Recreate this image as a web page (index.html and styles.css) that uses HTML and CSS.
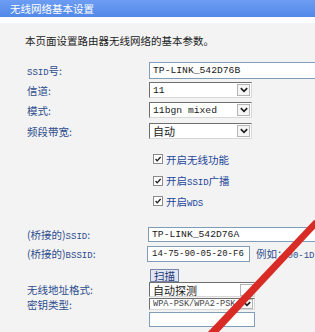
FILE: index.html
```html
<!DOCTYPE html>
<html lang="zh-CN">
<head>
    <meta charset="UTF-8">
    <meta name="viewport" content="width=device-width, initial-scale=1.0">
    <title>无线网络基本设置</title>
    <link rel="stylesheet" href="styles.css">
</head>
<body>

<div class="header">无线网络基本设置</div>

<div class="page">
    <p class="desc">本页面设置路由器无线网络的基本参数。</p>

    <div class="row r-ssid">
        <span class="lbl"><span class="en">SSID</span>号:</span>
        <span class="txt wide">TP-LINK_542D76B</span>
    </div>
    <div class="row r-norm">
        <span class="lbl">信道:</span>
        <span class="sel"><span class="val">11</span><span class="dd"><svg viewBox="0 0 11 11"><path d="M2 3.5 L5.5 7 L9 3.5"/></svg></span></span>
    </div>
    <div class="row r-norm">
        <span class="lbl">模式:</span>
        <span class="sel"><span class="val">11bgn mixed</span><span class="dd"><svg viewBox="0 0 11 11"><path d="M2 3.5 L5.5 7 L9 3.5"/></svg></span></span>
    </div>
    <div class="row r-band">
        <span class="lbl">频段带宽:</span>
        <span class="sel"><span class="val cjk">自动</span><span class="dd"><svg viewBox="0 0 11 11"><path d="M2 3.5 L5.5 7 L9 3.5"/></svg></span></span>
    </div>

    <div class="row check c1">
        <span class="cb"><svg viewBox="0 0 10 10"><path d="M2 5 L4 7.3 L8.3 2.5"/></svg></span>
        <span class="ctext">开启无线功能</span>
    </div>
    <div class="row check c2">
        <span class="cb"><svg viewBox="0 0 10 10"><path d="M2 5 L4 7.3 L8.3 2.5"/></svg></span>
        <span class="ctext">开启<span class="en">SSID</span>广播</span>
    </div>
    <div class="row check c3">
        <span class="cb"><svg viewBox="0 0 10 10"><path d="M2 5 L4 7.3 L8.3 2.5"/></svg></span>
        <span class="ctext">开启<span class="en">WDS</span></span>
    </div>

    <div class="row r-bridge">
        <span class="lbl">(桥接的)<span class="en">SSID</span>:</span>
        <span class="txt wide thin">TP-LINK_542D76A</span>
    </div>
    <div class="row r-bssid">
        <span class="lbl">(桥接的)<span class="en">BSSID</span>:</span>
        <span class="txt mac">14-75-90-05-20-F6</span>
        <span class="hint">例如：<span class="en">00-1D</span></span>
    </div>
    <div class="row r-scan">
        <span class="lbl"></span>
        <span class="btn">扫描</span>
    </div>
    <div class="row r-addr">
        <span class="lbl">无线地址格式:</span>
        <span class="sel big"><span class="val cjk">自动探测</span><span class="dd blank"></span></span>
    </div>
    <div class="row r-key">
        <span class="lbl">密钥类型:</span>
        <span class="sel big small"><span class="val">WPA-PSK/WPA2-PSK</span><span class="dd"><svg viewBox="0 0 11 11"><path d="M2 3.5 L5.5 7 L9 3.5"/></svg></span></span>
    </div>
    <div class="row r-last">
        <span class="lbl"></span>
        <span class="txt big"></span>
    </div>

    <svg class="arrow" viewBox="0 0 315 332" width="315" height="332">
        <polygon points="206,334 217,334 320,223 314,220"/>
    </svg>
</div>

</body>
</html>
```

FILE: styles.css
```css
body {
    margin: 0;
    background-color: #f3f3f3;
    font-family: "Noto Sans CJK SC", sans-serif;
    width: 315px;
    height: 332px;
    overflow: hidden;
}
.header {
    height: 17px;
    line-height: 17px;
    padding-left: 10px;
    font-size: 10.5px;
    color: #ffffff;
    background: linear-gradient(#6c9df3, #5288e8);
    border-bottom: 6px solid #fdfdff;
}
.page {
    position: relative;
    height: 309px;
}
.desc {
    margin: 0;
    padding: 10px 0 0 25px;
    height: 27px;
    line-height: 16px;
    font-size: 10.5px;
    color: #1c1c1c;
}
.row {
    display: flex;
    align-items: center;
    padding-left: 27px;
}
.lbl {
    width: 122px;
    flex-shrink: 0;
    font-size: 10.5px;
    color: #2e4c8e;
    white-space: nowrap;
}
.en {
    font-family: "Liberation Mono", monospace;
    font-size: 9px;
}
.r-ssid { height: 20px; }
.r-norm { height: 20px; }
.r-band { height: 22px; }
.check {
    padding-left: 153px;
    gap: 3px;
}
.c1 { height: 22px; margin-top: 6px; }
.c2 { height: 21px; }
.c3 { height: 20px; }
.r-bridge { height: 20px; margin-top: 13px; }
.r-bssid { height: 19px; }
.r-scan { height: 13px; margin-top: 6px; }
.r-addr { height: 15px; }
.r-key { height: 14px; }
.r-last { height: 20px; align-items: flex-start; padding-top: 1px; }

.txt {
    box-sizing: border-box;
    height: 17px;
    border: 1px solid #7f9db9;
    background-color: #ffffff;
    font-family: "Liberation Mono", monospace;
    font-size: 9.7px;
    line-height: 15px;
    padding-left: 3px;
    color: #1a1a1a;
    white-space: nowrap;
    overflow: hidden;
    flex-shrink: 0;
}
.wide { width: 180px; }
.thin { height: 15px; line-height: 13px; margin-left: -1px; }
.mac {
    width: 103px;
    height: 16px;
    line-height: 14px;
    margin-left: -2px;
    padding-left: 4px;
    font-size: 9px;
}
.hint {
    margin-left: 6px;
    font-size: 10.5px;
    color: #2e4c8e;
    white-space: nowrap;
}
.sel {
    box-sizing: border-box;
    display: flex;
    align-items: center;
    justify-content: space-between;
    width: 103px;
    height: 16px;
    background-color: #ffffff;
    border-style: solid;
    border-width: 1px;
    border-color: #6f6f6f #d8d8d8 #d8d8d8 #6f6f6f;
    padding: 0 1px 0 3px;
    flex-shrink: 0;
}
.val {
    font-family: "Liberation Mono", monospace;
    font-size: 9.7px;
    color: #1a1a1a;
    white-space: nowrap;
}
.val.cjk {
    font-family: "Noto Sans CJK SC", sans-serif;
    font-size: 11px;
}
.dd {
    box-sizing: border-box;
    display: flex;
    align-items: center;
    justify-content: center;
    width: 13px;
    height: 12px;
    flex-shrink: 0;
    border: 1px solid #b4b4b4;
    background-color: #f6f6f6;
}
.dd svg {
    width: 10px;
    height: 10px;
    fill: none;
    stroke: #1e1e1e;
    stroke-width: 1.8;
}
.dd.blank { background-color: #ffffff; }
.big { width: 106px; height: 15px; }
.sel.small { height: 12px; }
.sel.small .val { font-size: 8.6px; color: #444; overflow: hidden; }
.sel.small .dd { height: 10px; }
.txt.big { width: 106px; }
.cb {
    box-sizing: border-box;
    width: 10px;
    height: 10px;
    border: 1px solid #8a8a8a;
    background-color: #ffffff;
    display: flex;
}
.cb svg {
    width: 8px;
    height: 8px;
    fill: none;
    stroke: #1e1e1e;
    stroke-width: 1.7;
}
.ctext {
    font-size: 10.5px;
    color: #24469a;
    white-space: nowrap;
}
.btn {
    box-sizing: border-box;
    height: 13px;
    line-height: 11px;
    padding: 0 3px;
    margin-left: 1px;
    border: 1px solid #7a86a8;
    background-color: #dfe4f2;
    font-size: 10.5px;
    color: #1e3a78;
}
.arrow {
    position: absolute;
    top: -23px;
    left: 0;
    fill: #d92b25;
    pointer-events: none;
}
```
